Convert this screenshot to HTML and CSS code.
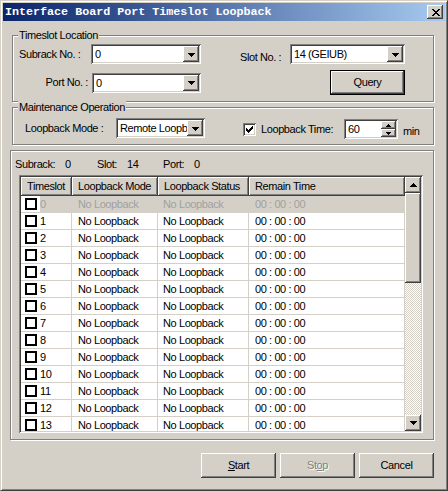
FILE: index.html
```html
<!DOCTYPE html>
<html>
<head>
<meta charset="utf-8">
<title>Interface Board Port Timeslot Loopback</title>
<link rel="stylesheet" href="styles.css">
</head>
<body>
<div class="win">
  <div class="title">
    <span class="title-text">Interface Board Port Timeslot Loopback</span>
    <div class="xbtn raised2">
      <svg width="8" height="7" viewBox="0 0 8 7" shape-rendering="crispEdges"><path d="M0 0h2v1h1v1h2v-1h1v-1h2v1h-1v1h-1v1h-1v1h1v1h1v1h1v1h-2v-1h-1v-1h-2v1h-1v1h-2v-1h1v-1h1v-1h1v-1h-1v-1h-1v-1h-1z" fill="#000"/></svg>
    </div>
  </div>
  <div class="client">
    <div class="grp g1">
      <span class="legend">Timeslot Location</span>
      <div class="g1grid">
        <span class="lbl l-sub">Subrack No. :</span>
        <div class="combo c1"><span class="val">0</span><span class="dd raised2"><svg width="7" height="4" viewBox="0 0 7 4" shape-rendering="crispEdges"><path d="M0 0h7v1h-1v1h-1v1h-1v1h-1v-1h-1v-1h-1v-1h-1z"/></svg></span></div>
        <span class="lbl l-slot">Slot No. :</span>
        <div class="combo c3"><span class="val">14 (GEIUB)</span><span class="dd raised2"><svg width="7" height="4" viewBox="0 0 7 4" shape-rendering="crispEdges"><path d="M0 0h7v1h-1v1h-1v1h-1v1h-1v-1h-1v-1h-1v-1h-1z"/></svg></span></div>
        <span class="lbl l-port">Port No. :</span>
        <div class="combo c2"><span class="val">0</span><span class="dd raised2"><svg width="7" height="4" viewBox="0 0 7 4" shape-rendering="crispEdges"><path d="M0 0h7v1h-1v1h-1v1h-1v1h-1v-1h-1v-1h-1v-1h-1z"/></svg></span></div>
        <div class="btn default q"><span class="btn-in">Query</span></div>
      </div>
    </div>

    <div class="grp g2">
      <span class="legend">Maintenance Operation</span>
      <div class="g2row">
        <span class="lbl l-mode">Loopback Mode :</span>
        <div class="combo c4"><span class="val">Remote Loopb</span><span class="dd raised2"><svg width="7" height="4" viewBox="0 0 7 4" shape-rendering="crispEdges"><path d="M0 0h7v1h-1v1h-1v1h-1v1h-1v-1h-1v-1h-1v-1h-1z"/></svg></span></div>
        <span class="chkbox"><svg width="7" height="7" viewBox="0 0 7 7" shape-rendering="crispEdges"><path d="M6 0h1v1h-1zM5 1h2v1h-2zM0 2h1v1h-1zM4 2h3v1h-3zM0 3h2v1h-2zM3 3h3v1h-3zM0 4h5v1h-5zM1 5h3v1h-3zM2 6h1v1h-1z"/></svg></span>
        <span class="lbl l-time">Loopback Time:</span>
        <div class="spin"><span class="val">60</span><span class="spin-btns"><span class="sbtn raised2"><svg width="5" height="3" viewBox="0 0 5 3" shape-rendering="crispEdges"><path d="M2 0h1v1h1v1h1v1h-5v-1h1v-1h1z"/></svg></span><span class="sbtn raised2"><svg width="5" height="3" viewBox="0 0 5 3" shape-rendering="crispEdges"><path d="M0 0h5v1h-1v1h-1v1h-1v-1h-1v-1h-1z"/></svg></span></span></div>
        <span class="lbl l-min">min</span>
      </div>
    </div>

    <div class="panel">
      <div class="info">
        <span class="i1">Subrack:</span><span class="i2">0</span><span class="i3">Slot:</span><span class="i4">14</span><span class="i5">Port:</span><span class="i6">0</span>
      </div>
      <div class="list">
        <div class="lv">
          <div class="hdr">
            <div class="hc w1">Timeslot</div>
            <div class="hc w2">Loopback Mode</div>
            <div class="hc w3">Loopback Status</div>
            <div class="hc w4">Remain Time</div>
          </div>
          <div class="rows">
            <div class="row dis"><div class="cell w1"><span class="chk"><span class="cb"></span></span>0</div><div class="cell w2">No Loopback</div><div class="cell w3">No Loopback</div><div class="cell w4">00 : 00 : 00</div></div>
            <div class="row"><div class="cell w1"><span class="chk"><span class="cb"></span></span>1</div><div class="cell w2">No Loopback</div><div class="cell w3">No Loopback</div><div class="cell w4">00 : 00 : 00</div></div>
            <div class="row"><div class="cell w1"><span class="chk"><span class="cb"></span></span>2</div><div class="cell w2">No Loopback</div><div class="cell w3">No Loopback</div><div class="cell w4">00 : 00 : 00</div></div>
            <div class="row"><div class="cell w1"><span class="chk"><span class="cb"></span></span>3</div><div class="cell w2">No Loopback</div><div class="cell w3">No Loopback</div><div class="cell w4">00 : 00 : 00</div></div>
            <div class="row"><div class="cell w1"><span class="chk"><span class="cb"></span></span>4</div><div class="cell w2">No Loopback</div><div class="cell w3">No Loopback</div><div class="cell w4">00 : 00 : 00</div></div>
            <div class="row"><div class="cell w1"><span class="chk"><span class="cb"></span></span>5</div><div class="cell w2">No Loopback</div><div class="cell w3">No Loopback</div><div class="cell w4">00 : 00 : 00</div></div>
            <div class="row"><div class="cell w1"><span class="chk"><span class="cb"></span></span>6</div><div class="cell w2">No Loopback</div><div class="cell w3">No Loopback</div><div class="cell w4">00 : 00 : 00</div></div>
            <div class="row"><div class="cell w1"><span class="chk"><span class="cb"></span></span>7</div><div class="cell w2">No Loopback</div><div class="cell w3">No Loopback</div><div class="cell w4">00 : 00 : 00</div></div>
            <div class="row"><div class="cell w1"><span class="chk"><span class="cb"></span></span>8</div><div class="cell w2">No Loopback</div><div class="cell w3">No Loopback</div><div class="cell w4">00 : 00 : 00</div></div>
            <div class="row"><div class="cell w1"><span class="chk"><span class="cb"></span></span>9</div><div class="cell w2">No Loopback</div><div class="cell w3">No Loopback</div><div class="cell w4">00 : 00 : 00</div></div>
            <div class="row"><div class="cell w1"><span class="chk"><span class="cb"></span></span>10</div><div class="cell w2">No Loopback</div><div class="cell w3">No Loopback</div><div class="cell w4">00 : 00 : 00</div></div>
            <div class="row"><div class="cell w1"><span class="chk"><span class="cb"></span></span>11</div><div class="cell w2">No Loopback</div><div class="cell w3">No Loopback</div><div class="cell w4">00 : 00 : 00</div></div>
            <div class="row"><div class="cell w1"><span class="chk"><span class="cb"></span></span>12</div><div class="cell w2">No Loopback</div><div class="cell w3">No Loopback</div><div class="cell w4">00 : 00 : 00</div></div>
            <div class="row"><div class="cell w1"><span class="chk"><span class="cb"></span></span>13</div><div class="cell w2">No Loopback</div><div class="cell w3">No Loopback</div><div class="cell w4">00 : 00 : 00</div></div>
          </div>
        </div>
        <div class="vscroll">
          <div class="sb-btn raised2"><svg width="7" height="4" viewBox="0 0 7 4" shape-rendering="crispEdges"><path d="M3 0h1v1h1v1h1v1h1v1h-7v-1h1v-1h1v-1h1z"/></svg></div>
          <div class="thumb raised2"></div>
          <div class="track"></div>
          <div class="sb-btn raised2"><svg width="7" height="4" viewBox="0 0 7 4" shape-rendering="crispEdges"><path d="M0 0h7v1h-1v1h-1v1h-1v1h-1v-1h-1v-1h-1v-1h-1z"/></svg></div>
        </div>
      </div>
    </div>

    <div class="btnrow">
      <div class="btn"><span class="btn-in"><u>S</u>tart</span></div>
      <div class="btn disabled"><span class="btn-in">St<u>o</u>p</span></div>
      <div class="btn"><span class="btn-in">Cancel</span></div>
    </div>
  </div>
</div>
</body>
</html>
```

FILE: styles.css
```css
* { box-sizing: border-box; margin: 0; padding: 0; }

body {
  margin: 0;
  background: #d4d0c8;
  font-family: "Liberation Sans", Arial, sans-serif;
  font-size: 11px;
  line-height: 13px;
  letter-spacing: -0.4px;
  color: #000;
  overflow: hidden;
}

.win {
  width: 448px;
  height: 491px;
  border: 1px solid;
  border-color: #d4d0c8 #404040 #404040 #d4d0c8;
  box-shadow: inset 1px 1px #fff, inset -1px -1px #808080;
  padding: 2px;
  background: #d4d0c8;
}

.title {
  height: 18px;
  background: linear-gradient(to right, #0a246a, #a6caf0);
  display: flex;
  align-items: center;
  justify-content: space-between;
  padding: 0 2px 0 2px;
}

.title-text {
  color: #fff;
  font-family: "Liberation Mono", "DejaVu Sans Mono", monospace;
  font-weight: bold;
  font-size: 11.7px;
  letter-spacing: 0;
  line-height: 14px;
}

.raised2 {
  background: #d4d0c8;
  box-shadow: inset -1px -1px #404040, inset 1px 1px #fff, inset -2px -2px #808080;
}

.xbtn {
  width: 16px;
  height: 14px;
  display: flex;
  align-items: center;
  justify-content: center;
  padding-left: 1px;
}

.client {
  padding: 0 11px 0 9px;
}

/* group boxes */
.grp {
  position: relative;
  border: 1px solid #808080;
  box-shadow: inset 1px 1px #fff, 1px 1px #fff;
}

.legend {
  position: absolute;
  top: -7px;
  left: 5px;
  padding: 0 1px;
  background: #d4d0c8;
  line-height: 13px;
}

.g1 {
  margin-top: 14px;
  height: 67px;
}

.g1grid {
  display: grid;
  grid-template-columns: 78px 110px 39px 50px 115px;
  grid-template-rows: 20px 25px;
  row-gap: 6px;
  padding-top: 8px;
}

.lbl { white-space: nowrap; }

.l-sub { grid-column: 1; grid-row: 1; align-self: center; padding-left: 6px; }
.c1 { grid-column: 2; grid-row: 1; }
.l-slot { grid-column: 4; grid-row: 1; align-self: end; }
.c3 { grid-column: 5; grid-row: 1; }
.l-port { grid-column: 1; grid-row: 2; align-self: center; text-align: right; padding-right: 3px; }
.c2 { grid-column: 2; grid-row: 2; align-self: center; margin-left: 1px; }
.q { grid-column: 5; grid-row: 2; justify-self: end; width: 74px; height: 25px; }

/* combo / fields */
.combo, .spin {
  height: 20px;
  background: #fff;
  box-shadow: inset 1px 1px #808080, inset -1px -1px #fff, inset 2px 2px #404040, inset -2px -2px #d4d0c8;
  display: flex;
  align-items: stretch;
  padding: 2px;
}

.combo .val, .spin .val {
  flex: 1;
  padding-left: 2px;
  line-height: 16px;
  white-space: nowrap;
  overflow: hidden;
}

.dd {
  width: 16px;
  height: 16px;
  display: flex;
  align-items: center;
  justify-content: center;
}

.dd svg { margin-top: 1px; }

/* group 2 */
.g2 {
  margin-top: 5px;
  height: 38px;
}

.g2row {
  display: flex;
  align-items: center;
  padding: 10px 0 0 12px;
  height: 30px;
}

.l-mode { width: 91px; }
.c4 { width: 89px; }

.chkbox {
  width: 13px;
  height: 13px;
  margin-left: 38px;
  background: #fff;
  box-shadow: inset 1px 1px #808080, inset -1px -1px #fff, inset 2px 2px #404040, inset -2px -2px #d4d0c8;
  display: flex;
  align-items: center;
  justify-content: center;
  margin-top: 2px;
}

.l-time { margin-left: 5px; width: 83px; margin-top: 2px; }

.spin { width: 54px; margin-top: 2px; }

.spin-btns {
  width: 15px;
  display: flex;
  flex-direction: column;
}

.sbtn {
  flex: 1;
  display: flex;
  align-items: center;
  justify-content: center;
}

.l-min { margin-left: 5px; margin-top: 7px; }

/* panel */
.panel {
  margin-top: 5px;
  margin-left: -2px;
  width: 424px;
  height: 290px;
  border: 1px solid #808080;
  box-shadow: inset 1px 1px #fff, 1px 1px #fff;
  padding-top: 7px;
}

.info {
  display: flex;
  padding-left: 4px;
  height: 13px;
}

.info span { display: inline-block; }
.i1 { width: 50px; }
.i2 { width: 32px; }
.i3 { width: 30px; }
.i4 { width: 36px; }
.i5 { width: 31px; }

.list {
  margin-top: 4px;
  margin-left: 8px;
  width: 404px;
  height: 258px;
  padding: 2px;
  background: #fff;
  box-shadow: inset 1px 1px #808080, inset -1px -1px #fff, inset 2px 2px #404040, inset -2px -2px #d4d0c8;
  display: flex;
}

.lv {
  width: 384px;
  height: 254px;
  overflow: hidden;
}

.hdr {
  display: flex;
  height: 19px;
}

.hc {
  height: 19px;
  background: #d4d0c8;
  box-shadow: inset -1px -1px #404040, inset 1px 1px #fff, inset -2px -2px #808080;
  padding-left: 6px;
  display: flex;
  align-items: center;
  white-space: nowrap;
}

.w1 { width: 51px; }
.w2 { width: 86px; }
.w3 { width: 91px; }
.w4 { width: 156px; }

.rows {
  height: 235px;
  overflow: hidden;
}

.row {
  display: flex;
  height: 17px;
  border-bottom: 1px solid #d4d0c8;
  background: #fff;
}

.cell {
  height: 16px;
  border-right: 1px solid #d4d0c8;
  display: flex;
  align-items: center;
  white-space: nowrap;
  padding-left: 6px;
}

.cell.w1 { padding-left: 0; }
.cell.w3 { padding-left: 5px; }

.chk {
  width: 19px;
  height: 16px;
  padding-left: 4px;
  display: flex;
  align-items: center;
}

.cb {
  width: 12px;
  height: 12px;
  border: 2px solid #000;
  background: #fff;
}

.row.dis { background: #d4d0c8; color: #a0a0a0; }
.row.dis .chk { background: #fff; }

.vscroll {
  width: 16px;
  height: 254px;
  display: flex;
  flex-direction: column;
}

.sb-btn {
  height: 16px;
  display: flex;
  align-items: center;
  justify-content: center;
}

.thumb { height: 90px; }

.track {
  flex: 1;
  background: repeating-conic-gradient(#fff 0 25%, #d4d0c8 0 50%) 0 0 / 2px 2px;
}

/* buttons */
.btnrow {
  margin-top: 13px;
  display: flex;
  justify-content: flex-end;
  gap: 4px;
}

.btn {
  width: 75px;
  height: 25px;
  background: #d4d0c8;
  box-shadow: inset -1px -1px #404040, inset 1px 1px #fff, inset -2px -2px #808080;
  display: flex;
  align-items: center;
  justify-content: center;
}

.btn.default {
  border: 1px solid #000;
}

.btn.default .btn-in {
  width: 100%;
  height: 100%;
  display: flex;
  align-items: center;
  justify-content: center;
  box-shadow: inset -1px -1px #404040, inset 1px 1px #fff, inset -2px -2px #808080;
}

.btn.default { box-shadow: none; }

.btn.disabled {
  color: #808080;
  text-shadow: 1px 1px #fff;
}

.btn u { text-decoration: underline; text-underline-offset: 1px; }
```
